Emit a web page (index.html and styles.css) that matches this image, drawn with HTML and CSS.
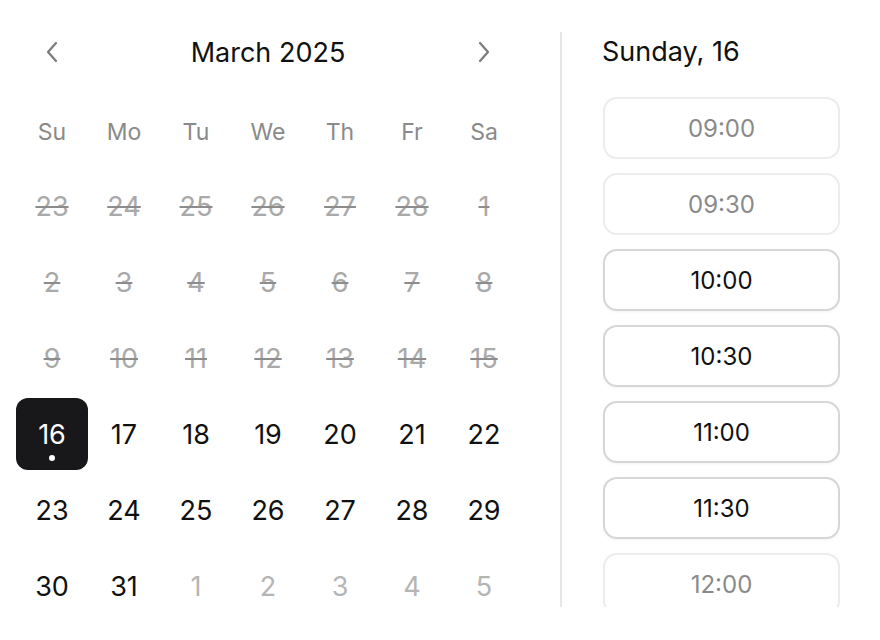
FILE: index.html
```html
<!DOCTYPE html>
<html>
<head>
<meta charset="utf-8">
<link rel="stylesheet" href="styles.css">
</head>
<body>
<div class="app">
  <section class="calendar">
    <div class="nav">
      <button class="chev" aria-label="Previous month">
        <svg width="14" height="22" viewBox="0 0 14 22"><path d="M11 2 L3 11 L11 20" fill="none" stroke="#7a7a7a" stroke-width="2.2" stroke-linecap="round" stroke-linejoin="round"/></svg>
      </button>
      <div class="month">March 2025</div>
      <button class="chev" aria-label="Next month">
        <svg width="14" height="22" viewBox="0 0 14 22"><path d="M3 2 L11 11 L3 20" fill="none" stroke="#7a7a7a" stroke-width="2.2" stroke-linecap="round" stroke-linejoin="round"/></svg>
      </button>
    </div>
    <div class="grid">
      <div class="wd">Su</div><div class="wd">Mo</div><div class="wd">Tu</div><div class="wd">We</div><div class="wd">Th</div><div class="wd">Fr</div><div class="wd">Sa</div>
      <div class="day off">23</div><div class="day off">24</div><div class="day off">25</div><div class="day off">26</div><div class="day off">27</div><div class="day off">28</div><div class="day off">1</div>
      <div class="day off">2</div><div class="day off">3</div><div class="day off">4</div><div class="day off">5</div><div class="day off">6</div><div class="day off">7</div><div class="day off">8</div>
      <div class="day off">9</div><div class="day off">10</div><div class="day off">11</div><div class="day off">12</div><div class="day off">13</div><div class="day off">14</div><div class="day off">15</div>
      <div class="day sel">16<span class="dot"></span></div><div class="day">17</div><div class="day">18</div><div class="day">19</div><div class="day">20</div><div class="day">21</div><div class="day">22</div>
      <div class="day">23</div><div class="day">24</div><div class="day">25</div><div class="day">26</div><div class="day">27</div><div class="day">28</div><div class="day">29</div>
      <div class="day">30</div><div class="day">31</div><div class="day next">1</div><div class="day next">2</div><div class="day next">3</div><div class="day next">4</div><div class="day next">5</div>
    </div>
  </section>
  <aside class="times">
    <div class="date">Sunday, 16</div>
    <div class="slots">
      <div class="slot disabled">09:00</div>
      <div class="slot disabled">09:30</div>
      <div class="slot">10:00</div>
      <div class="slot">10:30</div>
      <div class="slot">11:00</div>
      <div class="slot">11:30</div>
      <div class="slot disabled">12:00</div>
    </div>
  </aside>
</div>
</body>
</html>
```

FILE: styles.css
```css
* { box-sizing: border-box; }
html, body { margin: 0; padding: 0; background: #fff; }
body {
  font-family: Inter, "Noto Sans", "Liberation Sans", sans-serif;
  color: #111;
  width: 880px;
  height: 640px;
  overflow: hidden;
}
.app {
  display: flex;
  align-items: flex-start;
  padding: 16px 0 0 16px;
}
.calendar {
  width: 504px;
  flex: none;
}
.nav {
  display: grid;
  grid-template-columns: 72px 1fr 72px;
  height: 72px;
  align-items: center;
}
.chev {
  border: 0;
  background: none;
  padding: 0;
  height: 72px;
  display: flex;
  align-items: center;
  justify-content: center;
  cursor: pointer;
}
.month {
  text-align: center;
  font-size: 27px;
  font-weight: 400;
  color: #111;
}
.grid {
  margin-top: 6px;
  display: grid;
  grid-template-columns: repeat(7, 72px);
  grid-auto-rows: 72px;
  row-gap: 4px;
}
.wd, .day {
  display: flex;
  align-items: center;
  justify-content: center;
  position: relative;
}
.wd {
  font-size: 23px;
  color: #8a8a8a;
  padding-top: 3px;
}
.day {
  font-size: 27px;
  color: #111;
  border-radius: 12px;
}
.day.off {
  color: #a9a9a9;
  text-decoration: line-through;
  text-decoration-color: #8c8c8c;
  text-decoration-thickness: 1.6px;
}
.day.next { color: #b5b5b5; }
.day.sel {
  background: #18181b;
  color: #fff;
}
.dot {
  position: absolute;
  left: 50%;
  bottom: 9px;
  width: 6px;
  height: 6px;
  margin-left: -3px;
  border-radius: 50%;
  background: #fff;
}
.times {
  margin-left: 40px;
  margin-top: 16px;
  height: 575px;
  width: 280px;
  border-left: 2px solid #e6e6e6;
  padding-left: 40px;
  overflow: hidden;
}
.date {
  height: 40px;
  line-height: 40px;
  font-size: 27px;
  font-weight: 400;
  color: #111;
}
.slots {
  margin-top: 25px;
  display: flex;
  flex-direction: column;
  gap: 14px;
  width: 238px;
  padding-left: 1px;
}
.slot {
  height: 62px;
  border: 2px solid #d6d6d6;
  border-radius: 14px;
  display: flex;
  align-items: center;
  justify-content: center;
  font-size: 24px;
  color: #111;
  background: #fff;
  box-shadow: 0 1px 3px rgba(0,0,0,0.05);
}
.slot.disabled {
  border-color: #ececec;
  color: #8a8a8a;
  box-shadow: none;
}
```
